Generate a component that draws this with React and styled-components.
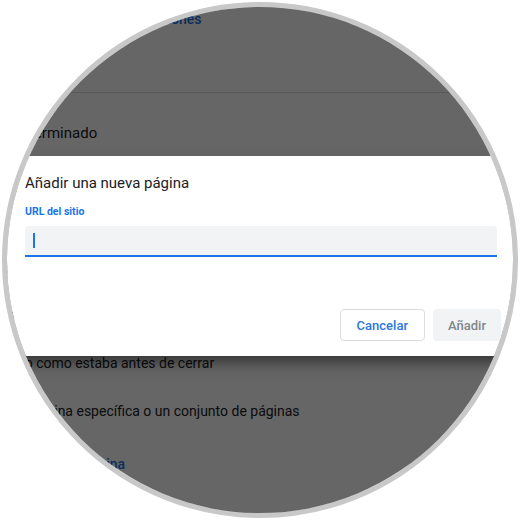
import React from "react";
import styled, { createGlobalStyle } from "styled-components";

const Global = createGlobalStyle`
  html, body { margin: 0; padding: 0; background: #ffffff; }
  body { font-family: Roboto, "Noto Sans", "Liberation Sans", sans-serif; }
  * { box-sizing: border-box; }
`;

const Stage = styled.div`
  width: 520px;
  height: 520px;
  padding: 2px 0 0 2px;
  background: #ffffff;
`;

const Lens = styled.div`
  position: relative;
  width: 516px;
  height: 516px;
  border: 5px solid #c8c8c8;
  border-radius: 50%;
  overflow: hidden;
  background: #ffffff;
`;

const Page = styled.div`
  display: flex;
  flex-direction: column;
  width: 600px;
  margin-left: -36px;
  color: #202124;
`;

const LinkRow = styled.div`
  height: 85px;
  padding-left: ${(p) => p.$indent || 0}px;
  font-size: 14px;
  line-height: 24px;
  font-weight: 500;
  color: #1a73e8;
  white-space: nowrap;
`;

const Divider = styled.div`
  height: 1px;
  background: #dadce0;
`;

const Row = styled.div`
  display: flex;
  align-items: center;
  height: ${(p) => p.$h || 48}px;
  margin-left: ${(p) => p.$indent || 0}px;
  font-size: ${(p) => p.$size || 14}px;
  font-weight: ${(p) => (p.$link ? 500 : 400)};
  color: ${(p) => (p.$link ? "#1a73e8" : "#202124")};
  white-space: nowrap;
`;

const Heading = styled.div`
  display: flex;
  align-items: flex-end;
  height: 118px;
  padding-bottom: 14px;
  font-size: 15px;
  font-weight: 500;
`;

const Overlay = styled.div`
  position: absolute;
  inset: 0;
  background: rgba(0, 0, 0, 0.6);
`;

const Dialog = styled.div`
  position: absolute;
  top: 149px;
  left: -2px;
  width: 512px;
  height: 200px;
  display: flex;
  flex-direction: column;
  background: #ffffff;
  box-shadow: 0 8px 14px -2px rgba(0, 0, 0, 0.5);
`;

const Title = styled.div`
  padding: 17px 20px 0;
  font-size: 15px;
  line-height: 20px;
  color: #202124;
`;

const Field = styled.div`
  display: flex;
  flex-direction: column;
  padding: 13px 20px 0;
`;

const Label = styled.div`
  font-size: 10.5px;
  line-height: 12px;
  font-weight: 700;
  color: #1a73e8;
`;

const InputBox = styled.div`
  display: flex;
  align-items: center;
  height: 31px;
  margin-top: 8px;
  padding-left: 8px;
  background: #f1f3f4;
  border-radius: 4px 4px 0 0;
  border-bottom: 2px solid #1a73e8;
`;

const Caret = styled.span`
  display: block;
  width: 1.5px;
  height: 15px;
  background: #1a73e8;
`;

const Actions = styled.div`
  display: flex;
  justify-content: flex-end;
  gap: 8px;
  margin-top: auto;
  padding: 0 16px 15px 20px;
`;

const Button = styled.button`
  height: 32px;
  padding: 0 ${(p) => (p.$primary ? 15 : 16)}px;
  border-radius: 4px;
  font-family: Roboto, "Liberation Sans", sans-serif;
  font-size: 13px;
  font-weight: 500;
  border: ${(p) => (p.$primary ? "none" : "1px solid #dadce0")};
  background: ${(p) => (p.$primary ? "#f1f3f4" : "#ffffff")};
  color: ${(p) => (p.$primary ? "#80868b" : "#2a76dc")};
`;

export default function App() {
  return (
    <>
      <Global />
      <Stage>
        <Lens>
          <Page>
            <LinkRow $indent={78}>Gestionar notificaciones</LinkRow>
            <Divider />
            <Row $h={80} $size={15} $indent={-56}>
              Navegador predeterminado
            </Row>
            <Heading>Al abrir</Heading>
            <Row>Abrir la página Nueva pestaña</Row>
            <Row>Abrir todo como estaba antes de cerrar</Row>
            <Row>Abrir una página específica o un conjunto de páginas</Row>
            <Row $h={58} $link>
              Añadir una nueva página
            </Row>
          </Page>
          <Overlay />
          <Dialog>
            <Title>Añadir una nueva página</Title>
            <Field>
              <Label>URL del sitio</Label>
              <InputBox>
                <Caret />
              </InputBox>
            </Field>
            <Actions>
              <Button>Cancelar</Button>
              <Button $primary disabled>
                Añadir
              </Button>
            </Actions>
          </Dialog>
        </Lens>
      </Stage>
    </>
  );
}
